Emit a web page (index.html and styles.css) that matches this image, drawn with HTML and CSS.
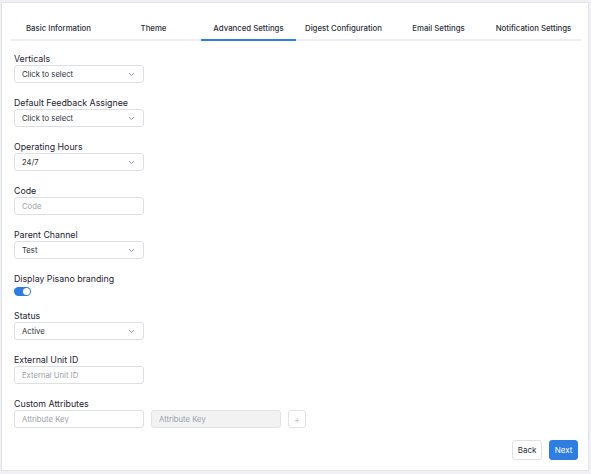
FILE: index.html
```html
<!DOCTYPE html>
<html>
<head>
<meta charset="utf-8">
<link rel="stylesheet" href="styles.css">
</head>
<body>
<div class="card">
  <div class="tabs">
    <div class="tab">Basic Information</div>
    <div class="tab">Theme</div>
    <div class="tab active">Advanced Settings</div>
    <div class="tab">Digest Configuration</div>
    <div class="tab">Email Settings</div>
    <div class="tab">Notification Settings</div>
  </div>
  <div class="form">
    <div class="group">
      <div class="label">Verticals</div>
      <div class="select"><span class="val">Click to select</span><svg class="chev" width="7" height="5" viewBox="0 0 7 5"><path d="M1 1l2.5 2.5L6 1" fill="none" stroke="#8a8f99" stroke-width="0.9"/></svg></div>
    </div>
    <div class="group">
      <div class="label">Default Feedback Assignee</div>
      <div class="select"><span class="val">Click to select</span><svg class="chev" width="7" height="5" viewBox="0 0 7 5"><path d="M1 1l2.5 2.5L6 1" fill="none" stroke="#8a8f99" stroke-width="0.9"/></svg></div>
    </div>
    <div class="group">
      <div class="label">Operating Hours</div>
      <div class="select"><span class="val">24/7</span><svg class="chev" width="7" height="5" viewBox="0 0 7 5"><path d="M1 1l2.5 2.5L6 1" fill="none" stroke="#8a8f99" stroke-width="0.9"/></svg></div>
    </div>
    <div class="group">
      <div class="label">Code</div>
      <div class="input"><span class="ph">Code</span></div>
    </div>
    <div class="group">
      <div class="label">Parent Channel</div>
      <div class="select"><span class="val">Test</span><svg class="chev" width="7" height="5" viewBox="0 0 7 5"><path d="M1 1l2.5 2.5L6 1" fill="none" stroke="#8a8f99" stroke-width="0.9"/></svg></div>
    </div>
    <div class="group">
      <div class="label">Display Pisano branding</div>
      <div class="toggle"><span class="knob"></span></div>
    </div>
    <div class="group">
      <div class="label">Status</div>
      <div class="select"><span class="val">Active</span><svg class="chev" width="7" height="5" viewBox="0 0 7 5"><path d="M1 1l2.5 2.5L6 1" fill="none" stroke="#8a8f99" stroke-width="0.9"/></svg></div>
    </div>
    <div class="group">
      <div class="label">External Unit ID</div>
      <div class="input"><span class="ph">External Unit ID</span></div>
    </div>
    <div class="group">
      <div class="label">Custom Attributes</div>
      <div class="attr-row">
        <div class="input"><span class="ph">Attribute Key</span></div>
        <div class="input disabled"><span class="ph">Attribute Key</span></div>
        <div class="plus">+</div>
      </div>
    </div>
  </div>
  <div class="actions">
    <button class="btn back">Back</button>
    <button class="btn next">Next</button>
  </div>
</div>
</body>
</html>
```
FILE: styles.css
```css
* { box-sizing: border-box; }
html, body { margin: 0; padding: 0; }
body {
  background: #f1f1f5;
  font-family: Inter, "Noto Sans", sans-serif;
  color: #1f2430;
  width: 591px;
  height: 474px;
  padding: 2px 2px 3px 1px;
}
.card {
  background: #fff;
  border: 1px solid #e3e4ea;
  height: 469px;
  padding: 0 7px 0 9px;
  display: flex;
  flex-direction: column;
}
.tabs {
  display: grid;
  grid-template-columns: repeat(6, 1fr);
  margin-top: 13px;
  border-bottom: 2px solid #eceef4;
}
.tab {
  text-align: center;
  font-size: 7.8px;
  font-weight: 500;
  color: #2b2f3a;
  height: 25px;
  line-height: 24px;
  margin-bottom: -2px;
  border-bottom: 2px solid transparent;
}
.tab.active { border-bottom-color: #2f7de1; }
.form {
  padding: 10px 0 0 3px;
  display: flex;
  flex-direction: column;
  gap: 12px;
}
.label {
  font-size: 8.8px;
  line-height: 13px;
  padding-top: 1px;
  color: #1f2430;
}
.select, .input {
  width: 130px;
  height: 18px;
  border: 1px solid #dddfe5;
  border-radius: 3px;
  display: flex;
  align-items: center;
  justify-content: space-between;
  padding: 0 8px 0 7px;
  font-size: 7.7px;
}
.val { color: #2e323c; }
.ph { color: #9a9ea8; }
.chev { display: block; }
.toggle {
  margin-top: 2px;
  width: 17px;
  height: 9px;
  border-radius: 5px;
  background: #2f7de1;
  position: relative;
}
.knob {
  position: absolute;
  right: 1px;
  top: 1px;
  width: 7px;
  height: 7px;
  border-radius: 50%;
  background: #fff;
}
.attr-row {
  display: flex;
  gap: 7px;
}
.input.disabled {
  background: #f2f2f3;
  border-color: #e2e3e7;
}
.plus {
  width: 18px;
  height: 18px;
  border: 1px solid #e2e3e7;
  border-radius: 3px;
  color: #c4c7cd;
  font-size: 10px;
  display: flex;
  align-items: center;
  justify-content: center;
}
.actions {
  margin-top: auto;
  margin-bottom: 10px;
  display: flex;
  justify-content: flex-end;
  gap: 7px;
  padding-right: 3px;
}
.btn {
  font-family: Inter, "Noto Sans", sans-serif;
  height: 20px;
  font-size: 8px;
  border-radius: 3px;
  padding: 0;
  width: 30px;
}
.back {
  background: #fff;
  border: 1px solid #dfe1e6;
  color: #2b2f3a;
}
.next {
  width: 29px;
  background: #2f7de1;
  border: 1px solid #2f7de1;
  color: #fff;
}
```
